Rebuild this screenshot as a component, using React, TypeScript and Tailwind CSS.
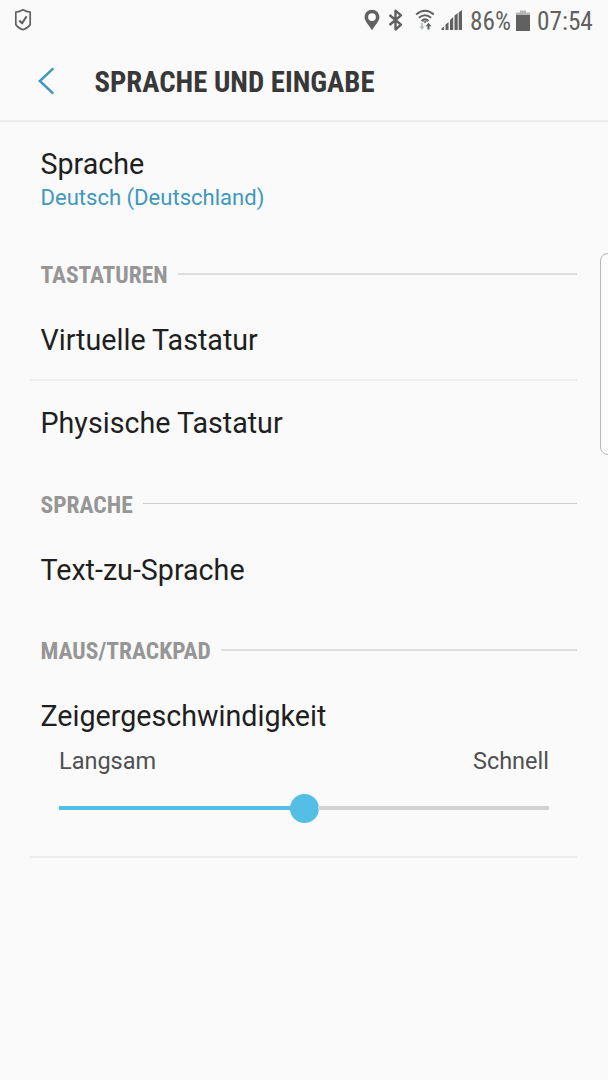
import React from "react";

const condensed = "font-['Roboto_Condensed','Roboto','Liberation_Sans_Narrow',sans-serif] [font-stretch:75%]";

function StatusBar() {
  return (
    <div className="flex h-[41px] items-center justify-between pl-[14px] pr-[15px] text-[#616161]">
      <svg className="mb-[1px] h-[24px] w-[18px]" viewBox="0 0 18 24" fill="none" stroke="currentColor" strokeWidth="1.7" strokeLinejoin="round">
        <path d="M9 1.8C6.8 3.2 4.4 4 1.8 4.1V16.5C3 18.8 6 20.6 9 21.8C12 20.6 15 18.8 16.2 16.5V4.1C13.6 4 11.2 3.2 9 1.8Z" />
        <path d="M5.3 12.4L8.1 15.3L12.6 8.3" strokeWidth="2.1" />
      </svg>
      <div className="flex items-center">
        <svg className="mb-[1px] h-[24px] w-[98px]" viewBox="0 0 98 24" fill="none">
          <path fillRule="evenodd" fill="currentColor" d="M8 1.800C3.900 1.800 .6 5 .6 9c0 4.500 4.500 8.200 7.400 13.200 2.900-5 7.400-8.700 7.400-13.200C15.400 5 12.100 1.800 8 1.800ZM8 5.200a3.900 3.900 0 1 1 0 7.800a3.900 3.900 0 0 1 0-7.800Z" />
          <path d="M25.500 7L37 16.700L31.500 21.500V2.700L37 7.300L25.500 17" stroke="currentColor" strokeWidth="2.400" strokeLinejoin="round" />
          <g stroke="currentColor" strokeWidth="2">
            <path d="M52.200 6.400Q61 -.8 69.800 6.400" />
            <path d="M54.900 9.700Q61 4.700 67.100 9.700" />
            <path d="M57.500 12.900Q61 9.900 64.500 12.900" />
          </g>
          <path d="M58.700 13.200H63.300L61 15.200Z" fill="currentColor" />
          <path d="M57 15V18.300H55.200L58 21.800L60.800 18.300H59V15Z" fill="#b8c0c3" />
          <path d="M63.500 21.500V18.300H61.500L64.500 14.700L67.500 18.300H65.500V21.500Z" fill="currentColor" />
          <g fill="currentColor">
            <path d="M77.500 22V20.500L80 18.500V22Z" />
            <path d="M81.500 22V16.500L84.500 14V22Z" />
            <path d="M86 22V12L89.200 9V22Z" />
            <path d="M90.500 22V7.500L93.700 5V22Z" />
            <path d="M94.700 22V4.500L98 2V22Z" />
          </g>
        </svg>
        <span className={`${condensed} ml-[8px] mt-[2px] w-[43px] whitespace-nowrap text-[25.300px] leading-[30px]`}>86%</span>
        <svg className="ml-[3px] h-[22px] w-[14px]" viewBox="0 0 14 22">
          <path d="M0 2.500H4V.5H10V2.500H14V6H0Z" fill="#b5b5b5" />
          <path d="M0 5H14V21H0Z" fill="currentColor" />
        </svg>
        <span className={`${condensed} ml-[7px] mt-[2px] w-[56px] whitespace-nowrap text-[25.300px] leading-[30px]`}>07:54</span>
      </div>
    </div>
  );
}

function SectionHeader({ label, line = "mb-[2px] h-[2px] bg-[#dedede]" }: { label: string; line?: string }) {
  return (
    <div className="flex h-[54px] items-center pl-[41px] pr-[31px]">
      <h2 className={`${condensed} -ml-[0.500px] text-[23.500px] font-bold leading-[30px] text-[#969696]`}>{label}</h2>
      <div className={`ml-[10px] flex-1 ${line}`} />
    </div>
  );
}

function SpeedSlider() {
  return (
    <div className="mx-[59px] mt-[15px] flex h-[32px] items-center">
      <div className="h-[3.500px] w-[232px] bg-[#54bfe5]" />
      <div className="-ml-[1.500px] -mr-[1px] h-[29px] w-[29px] rounded-full bg-[#54bfe5]" />
      <div className="h-[3.500px] flex-1 bg-[#d3d3d3]" />
    </div>
  );
}

export default function App() {
  return (
    <div className="relative h-[1080px] w-[608px] overflow-hidden bg-[#fafafa] font-['Roboto',sans-serif] text-[28.650px] leading-[34px] text-[#1f1f1f]">
      <StatusBar />
      <header className="flex h-[81px] items-center border-b-2 border-[#ececec] pl-[37px]">
        <svg className="h-[28px] w-[18px]" viewBox="0 0 18 28" fill="none" stroke="#4198bb" strokeWidth="2.500">
          <path d="M16.300 1.300L2.800 14L16.300 26.700" />
        </svg>
        <h1 className={`${condensed} ml-[39.500px] mt-[3px] text-[28.750px] font-bold leading-[34px] text-[#383838]`}>SPRACHE UND EINGABE</h1>
      </header>
      <main>
        <div className="h-[126px] pl-[40.500px] pt-[25px]">
          <div>Sprache</div>
          <div className="text-[22.050px] leading-[33px] text-[#4198bb]">Deutsch (Deutschland)</div>
        </div>
        <SectionHeader label="TASTATUREN" />
        <div className="flex h-[77px] items-center pb-[2px] pl-[40.500px]">Virtuelle Tastatur</div>
        <div className="ml-[30px] mr-[31px] h-[2px] bg-[#ededed]" />
        <div className="mb-[12px] flex h-[85px] items-center pb-[2px] pl-[40.500px]">Physische Tastatur</div>
        <SectionHeader label="SPRACHE" line="mb-[3px] h-[1px] bg-[#cecece]" />
        <div className="mb-[14px] flex h-[78px] items-center pb-[3px] pl-[40.500px]">Text-zu-Sprache</div>
        <SectionHeader label="MAUS/TRACKPAD" />
        <div className="pl-[40.500px] pt-[21px]">Zeigergeschwindigkeit</div>
        <div className="mx-[59px] mt-[12px] flex justify-between text-[23.500px] leading-[32px] text-[#505050]">
          <span>Langsam</span>
          <span>Schnell</span>
        </div>
        <SpeedSlider />
        <div className="ml-[30px] mr-[31px] mt-[32px] h-[2px] bg-[#ededed]" />
      </main>
      <div className="absolute right-[-8px] top-[253px] h-[202px] w-[16px] rounded-l-[8px] border border-[#b8b8b8] bg-[#fcfcfc]" />
    </div>
  );
}
